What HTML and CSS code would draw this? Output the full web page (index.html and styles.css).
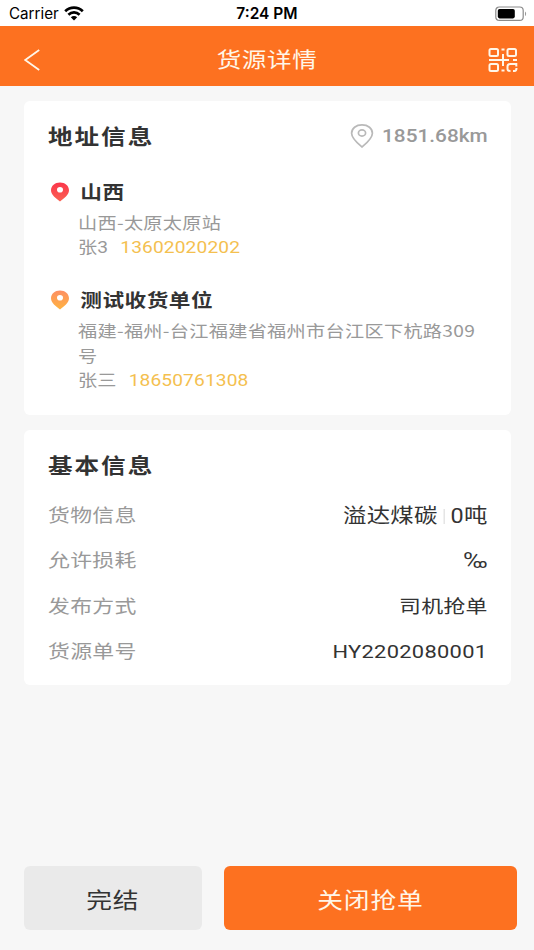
FILE: index.html
```html
<!DOCTYPE html>
<html lang="zh-CN">
<head>
<meta charset="utf-8">
<title>货源详情</title>
<link rel="stylesheet" href="styles.css">
</head>
<body>
<div class="statusbar">
  <div class="carrier"><span>Carrier</span>
    <svg width="20" height="15" viewBox="0 0 20 15"><g fill="none" stroke="#000" stroke-width="2.7"><path d="M1.2 5.2C6.2.4 13.8.4 18.8 5.2"/><path d="M4.4 8.7c3.2-3 8-3 11.2 0"/></g><path d="M6.8 11.2c1.9-1.7 4.5-1.7 6.4 0L10 14.4z"/></svg>
  </div>
  <div class="time">7:24 PM</div>
  <svg class="battery" width="32" height="16" viewBox="0 0 32 16"><rect x=".8" y="1" width="27.4" height="13.4" rx="3.5" fill="none" stroke="#8b8b8b" stroke-width="1.2"/><rect x="2.8" y="3" width="17" height="9.4" rx="1.8"/><path d="M30 5.4c1.5.8 1.5 3.8 0 4.600z" fill="#999"/></svg>
</div>
<header class="navbar">
  <svg class="back" width="18" height="24" viewBox="0 0 18 24"><path d="M15.200 2 1.200 12l14 10" fill="none" stroke="#fff6e8" stroke-width="1.8"/></svg>
  <h1 class="wide">货源详情</h1>
  <svg class="qr" width="30" height="26" viewBox="0 0 30 26"><g fill="none" stroke="#fff6e8" stroke-width="2"><rect x="1.500" y="2" width="8.500" height="7" rx="1.500"/><rect x="19.500" y="2" width="8.500" height="7" rx="1.500"/><rect x="1.500" y="17" width="8.500" height="7" rx="1.500"/><path d="M1 13h20M25 13H29M15 7v12M13.500 2.500h3M13.500 23.500h3M28.300 19.500V17H22q-2.500 0-2.500 2.500V22q0 2 3 2M25 24h1.500q2 0 2-3"/></g></svg>
</header>
<main>
  <section class="card address">
    <div class="head">
      <h2 class="wide">地址信息</h2>
      <div class="distance">
        <svg width="24" height="26" viewBox="0 0 24 26"><path d="M12 24C8 20.600 1.600 15.500 1.600 10.200 1.600 5.300 6 1.900 12 1.900s10.400 3.400 10.400 8.300C22.400 15.500 16 20.600 12 24z" fill="none" stroke="#b9b9b9" stroke-width="1.700"/><ellipse cx="12" cy="10" rx="3.600" ry="3.100" fill="none" stroke="#b9b9b9" stroke-width="1.700"/></svg>
        <span class="wide km">1851.68km</span>
      </div>
    </div>
    <div class="stop from">
      <svg class="pin" width="20" height="20" viewBox="0 0 20 20"><defs><linearGradient id="red" x2="0" y2="1"><stop stop-color="#fb364b"/><stop offset="1" stop-color="#fa6253"/></linearGradient></defs><path fill="url(#red)" fill-rule="evenodd" d="M10 19.500C6 16.500 1 12.800 1 8.300 1 3.700 5 .5 10 .5s9 3.200 9 7.800c0 4.500-5 8.200-9 11.200zM10 5a3 2.800 0 1 0 0 5.600A3 2.800 0 0 0 10 5z"/></svg>
      <div class="info">
        <h3 class="wide">山西</h3>
        <p class="wide place">山西-太原太原站</p>
        <p class="wide contact">张3<span class="phone">13602020202</span></p>
      </div>
    </div>
    <div class="stop to">
      <svg class="pin" width="20" height="20" viewBox="0 0 20 20"><defs><linearGradient id="amber" x2="0" y2="1"><stop stop-color="#fd8f63"/><stop offset="1" stop-color="#ffb340"/></linearGradient></defs><path fill="url(#amber)" fill-rule="evenodd" d="M10 19.500C6 16.500 1 12.800 1 8.300 1 3.700 5 .5 10 .5s9 3.200 9 7.800c0 4.500-5 8.200-9 11.200zM10 5a3 2.800 0 1 0 0 5.600A3 2.800 0 0 0 10 5z"/></svg>
      <div class="info">
        <h3 class="wide">测试收货单位</h3>
        <p class="wide place">福建-福州-台江福建省福州市台江区下杭路309号</p>
        <p class="wide contact">张三<span class="phone">18650761308</span></p>
      </div>
    </div>
  </section>
  <section class="card basic">
    <div class="head"><h2 class="wide">基本信息</h2></div>
    <dl>
      <div class="row"><dt class="wide">货物信息</dt><dd class="wide goods">溢达煤碳<i class="divider"></i>0吨</dd></div>
      <div class="row"><dt class="wide">允许损耗</dt><dd class="wide permille">‰</dd></div>
      <div class="row"><dt class="wide">发布方式</dt><dd class="wide">司机抢单</dd></div>
      <div class="row"><dt class="wide">货源单号</dt><dd class="wide">HY2202080001</dd></div>
    </dl>
  </section>
</main>
<footer>
  <button class="finish"><span class="wide">完结</span></button>
  <button class="close"><span class="wide">关闭抢单</span></button>
</footer>
</body>
</html>
```
FILE: styles.css
```css
* { box-sizing: border-box; }
body {
  margin: 0;
  height: 950px;
  display: flex;
  flex-direction: column;
  overflow: hidden;
  background: #f7f7f7;
  color: #333;
  font-family: Roboto, "Noto Sans CJK SC", sans-serif;
}
h1, h2, h3, p, dl, dd { margin: 0; }
svg { display: block; flex: none; }
.wide { transform: scaleX(1.17); transform-origin: left center; white-space: nowrap; }

.statusbar {
  height: 26px;
  padding: 2px 7px 0 9px;
  display: grid;
  grid-template-columns: 1fr auto 1fr;
  align-items: center;
  background: #fff;
  color: #000;
  font: 15.2px/24px Inter, sans-serif;
}
.carrier { display: flex; align-items: center; gap: 5px; }
.carrier svg { margin-top: -2px; }
.time { font-weight: 600; font-size: 15.5px; margin-right: 2px; }
.battery { justify-self: end; margin-top: -1px; }

.navbar {
  height: 60px;
  padding: 8px 16px 0 24px;
  display: grid;
  grid-template-columns: 1fr auto 1fr;
  align-items: center;
  background: #fd7120;
  color: #fff6e8;
}
.navbar h1 { font-size: 21px; font-weight: 400; line-height: 30px; letter-spacing: .5px; transform-origin: center; margin: 0 9px 0 0; }
.qr { justify-self: end; }

main { flex: 1; padding: 15px 23px 0 24px; }
.card { background: #fff; border-radius: 6px; padding: 0 24px; }
.address { height: 314px; }
.basic { height: 255px; margin-top: 15px; }
.head { height: 70px; display: flex; align-items: center; justify-content: space-between; }
h2 { font-size: 21px; line-height: 30px; font-weight: 700; letter-spacing: 1.7px; padding-top: 1px; }
.distance { display: flex; align-items: center; width: 137px; gap: 8px; }
.km { font-size: 17.800px; font-weight: 500; color: #999; line-height: 24px; }

.stop { display: flex; }
.pin { margin: 11px 10px 0 2px; }
.info { width: 350px; margin-left: -2px; }
.info h3 { font-size: 18.500px; font-weight: 700; line-height: 36px; height: 39px; padding: 4px 0 0 2px; letter-spacing: .4px; }
.info p { font-size: 16.400px; line-height: 24.400px; color: #999; }
.info .place { font-family: "Noto Sans CJK SC", sans-serif; letter-spacing: .25px; white-space: normal; }
.info .contact { padding-top: 1.600px; }
.to { margin-top: 19px; }
.phone { color: #f4c04f; margin-left: 10.500px; letter-spacing: .1px; }

.row { height: 45.300px; display: flex; align-items: center; justify-content: space-between; }
dl { margin-top: -6.500px; }
dt, dd { font-size: 18.700px; line-height: 28px; letter-spacing: .25px; }
dt { color: #999; }
dd.wide { transform-origin: right center; margin-right: -.8px; }
.goods { font-size: 20px; display: flex; align-items: center; }
.permille { font-size: 21.500px; }
.divider { width: 1px; height: 15px; background: #ddd; margin: 0 5px; }

footer { height: 84px; padding: 0 17px 20px 24px; display: grid; grid-template-columns: 178px 293px; gap: 22px; }
button { border: 0; border-radius: 6px; padding: 0 0 1px; font: 22px/32px "Noto Sans CJK SC", sans-serif; display: flex; align-items: center; justify-content: center; letter-spacing: .7px; }
button .wide { transform-origin: center; }
.finish { background: #eaeaea; color: #333; }
.close { background: #fd7120; color: #fff6e8; }
```
